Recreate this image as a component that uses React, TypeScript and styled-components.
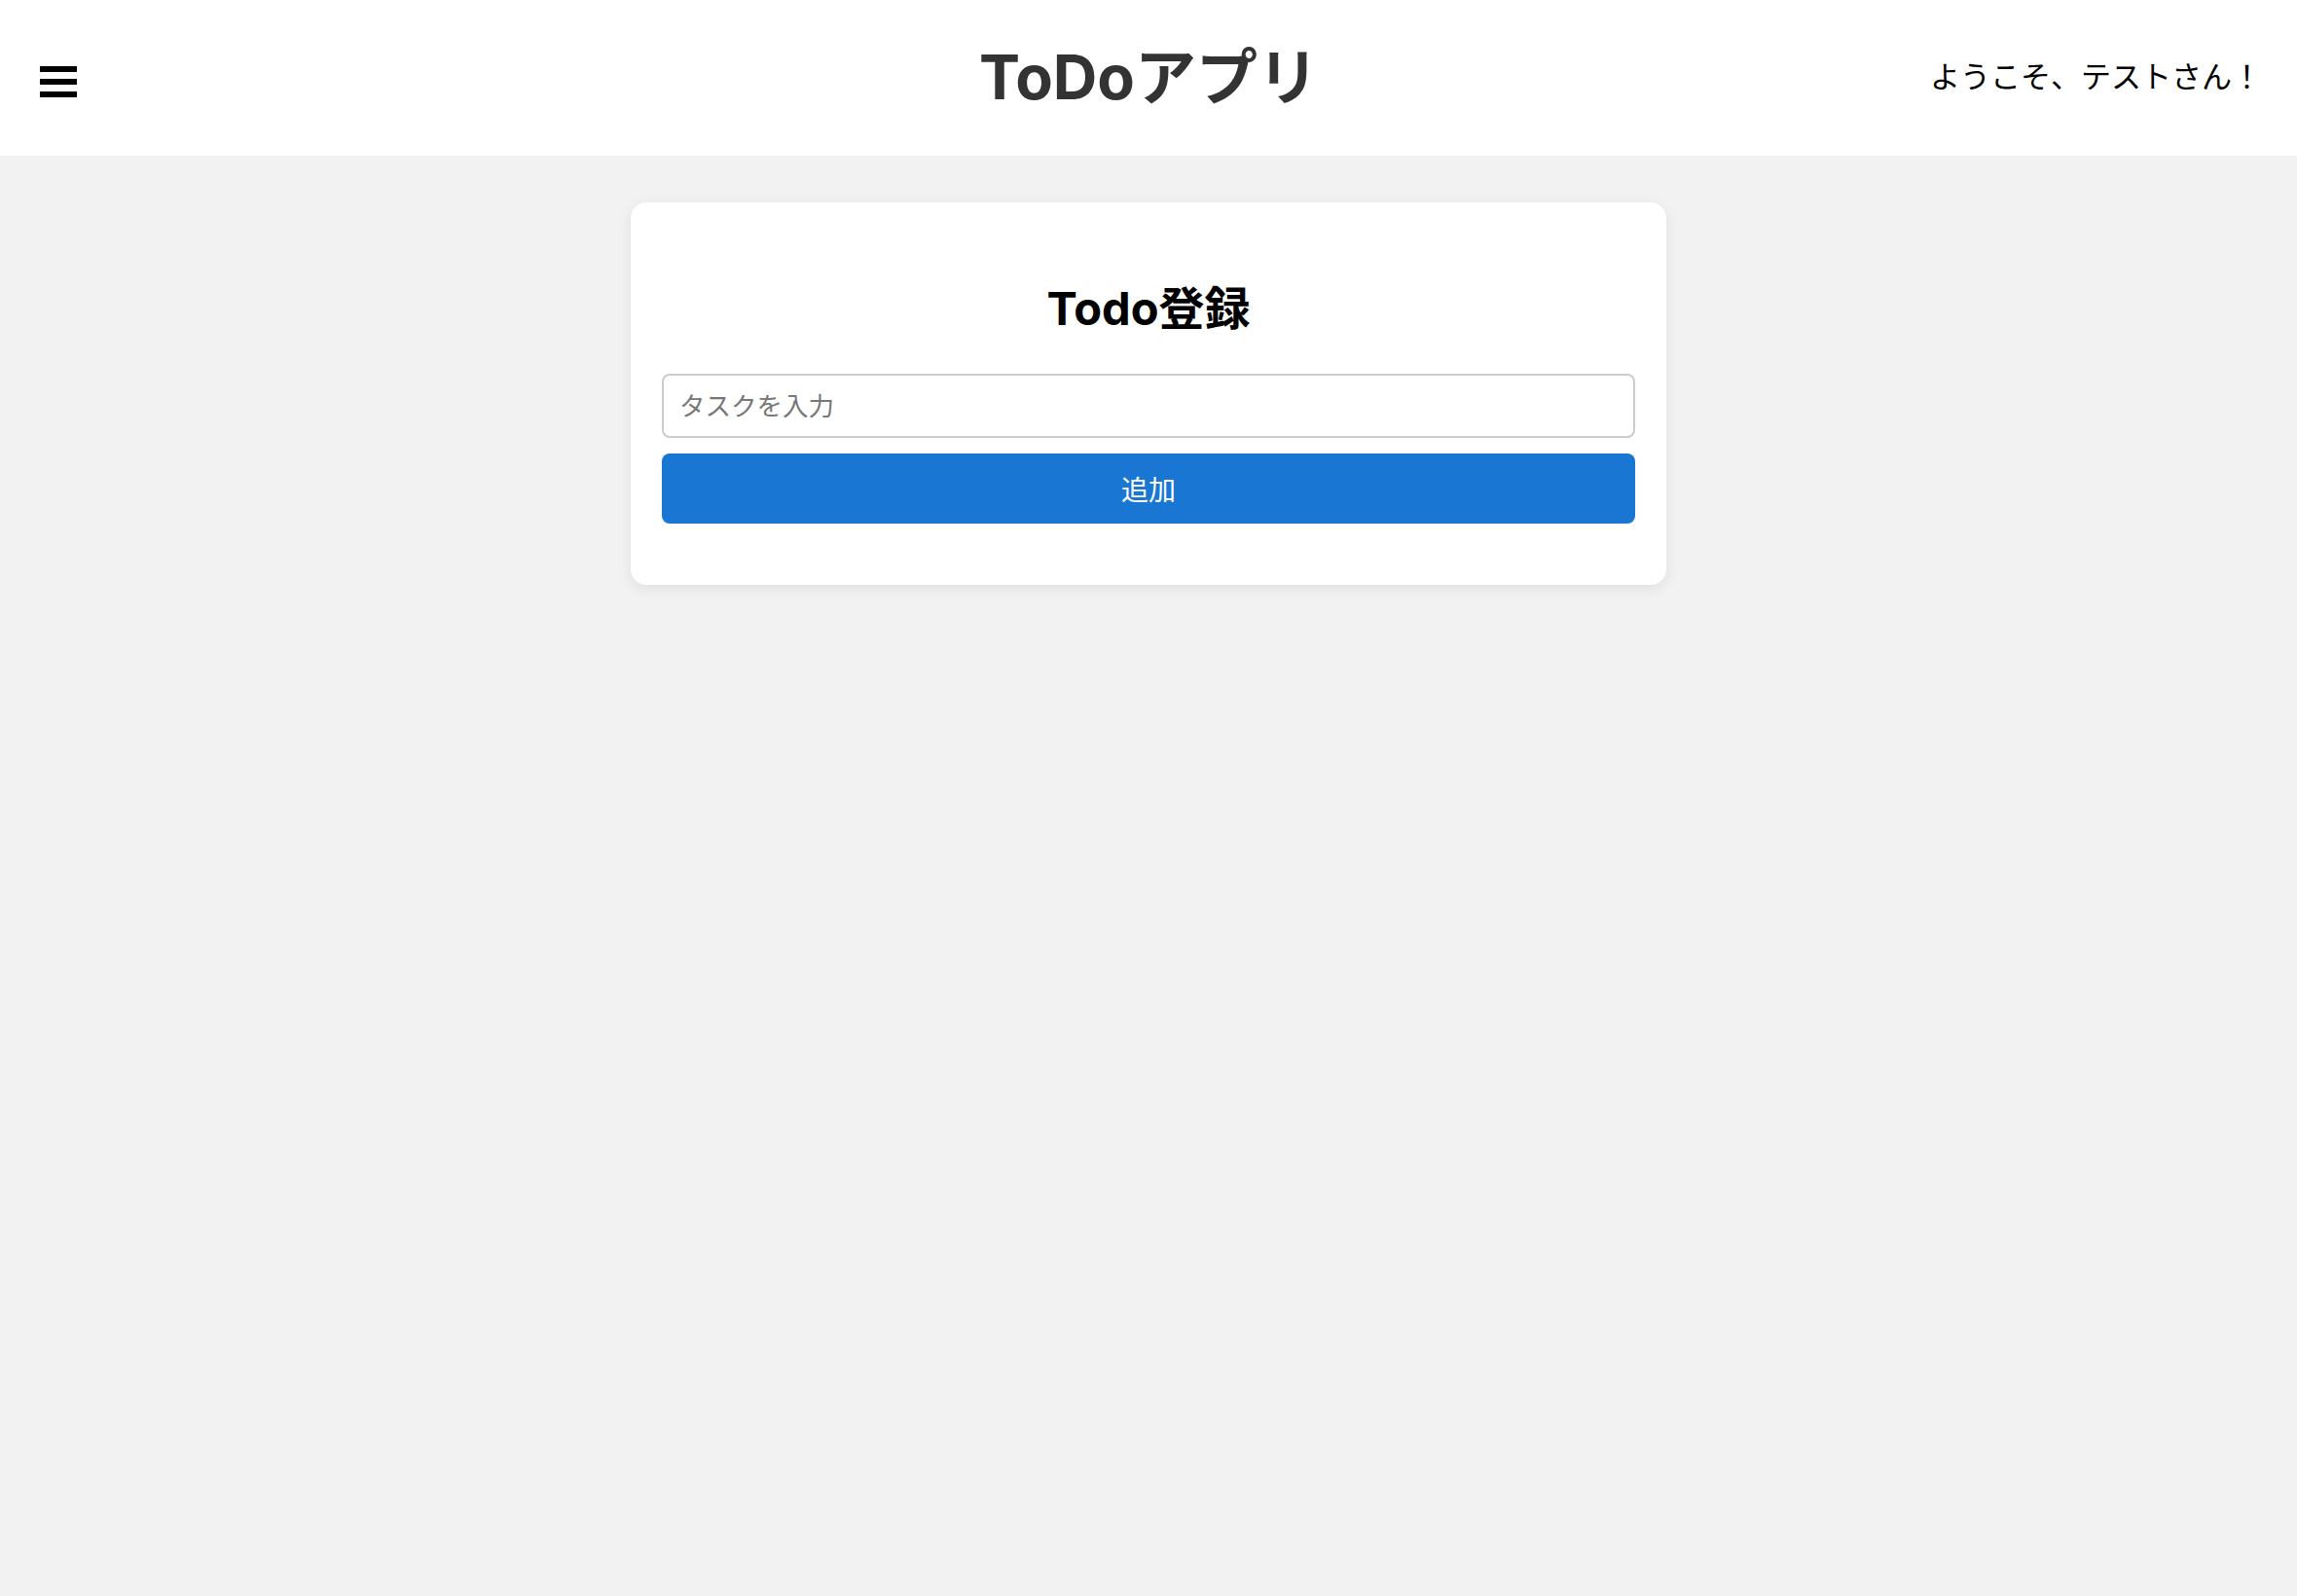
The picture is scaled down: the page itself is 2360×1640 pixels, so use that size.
import React from "react";
import styled, { createGlobalStyle } from "styled-components";

const GlobalStyle = createGlobalStyle`
  html, body {
    margin: 0;
    padding: 0;
    background: #f2f2f2;
    font-family: "Inter", "Noto Sans CJK JP", sans-serif;
  }
  #root {
    min-height: 100vh;
  }
  * { box-sizing: border-box; }
`;

const Page = styled.div`
  min-height: 100vh;
  background: #f2f2f2;
`;

const Header = styled.header`
  height: 160px;
  background: #ffffff;
  display: grid;
  grid-template-columns: 1fr auto 1fr;
  align-items: center;
  padding: 0 36px 0 41px;
`;

const MenuButton = styled.button`
  justify-self: start;
  display: flex;
  flex-direction: column;
  gap: 7px;
  width: 38px;
  padding: 0;
  margin-top: 8px;
  border: none;
  background: transparent;
  cursor: pointer;
`;

const MenuBar = styled.span`
  display: block;
  width: 38px;
  height: 6px;
  background: #000;
`;

const Title = styled.h1`
  margin: 0 4px 0 0;
  font-family: "Inter", "Noto Sans CJK JP", sans-serif;
  font-size: 63px;
  font-weight: 700;
  color: #333333;
  line-height: 1.2;
`;

const Welcome = styled.div`
  justify-self: end;
  margin-bottom: 8px;
  font-family: "Noto Sans CJK JP", sans-serif;
  font-size: 31px;
  color: #000;
`;

const Card = styled.main`
  width: 1064px;
  margin: 48px auto 0;
  background: #ffffff;
  border-radius: 16px;
  box-shadow: 0 4px 16px rgba(0, 0, 0, 0.08);
  padding: 32px 32px 63px;
`;

const CardTitle = styled.h2`
  margin: 50px 0 40px;
  text-align: center;
  font-family: "Inter", "Noto Sans CJK JP", sans-serif;
  font-size: 47px;
  font-weight: 700;
  line-height: 54px;
  color: #000;
`;

const Form = styled.form`
  display: flex;
  flex-direction: column;
  gap: 16px;
`;

const TaskInput = styled.input`
  height: 66px;
  width: 100%;
  border: 2px solid #cccccc;
  border-radius: 8px;
  padding: 0 16px 4px;
  font-family: "Noto Sans CJK JP", sans-serif;
  font-size: 26.5px;
  color: #000;
  outline: none;
  &::placeholder {
    color: #777777;
  }
`;

const AddButton = styled.button`
  height: 72px;
  width: 100%;
  border: none;
  border-radius: 8px;
  background: #1976d2;
  color: #ffffff;
  font-family: "Noto Sans CJK JP", sans-serif;
  font-size: 28px;
  cursor: pointer;
`;

export default function App() {
  return (
    <>
      <GlobalStyle />
      <Page>
        <Header>
          <MenuButton aria-label="menu">
            <MenuBar />
            <MenuBar />
            <MenuBar />
          </MenuButton>
          <Title>ToDoアプリ</Title>
          <Welcome>ようこそ、テストさん！</Welcome>
        </Header>
        <Card>
          <CardTitle>Todo登録</CardTitle>
          <Form onSubmit={(e) => e.preventDefault()}>
            <TaskInput placeholder="タスクを入力" />
            <AddButton type="submit">追加</AddButton>
          </Form>
        </Card>
      </Page>
    </>
  );
}
